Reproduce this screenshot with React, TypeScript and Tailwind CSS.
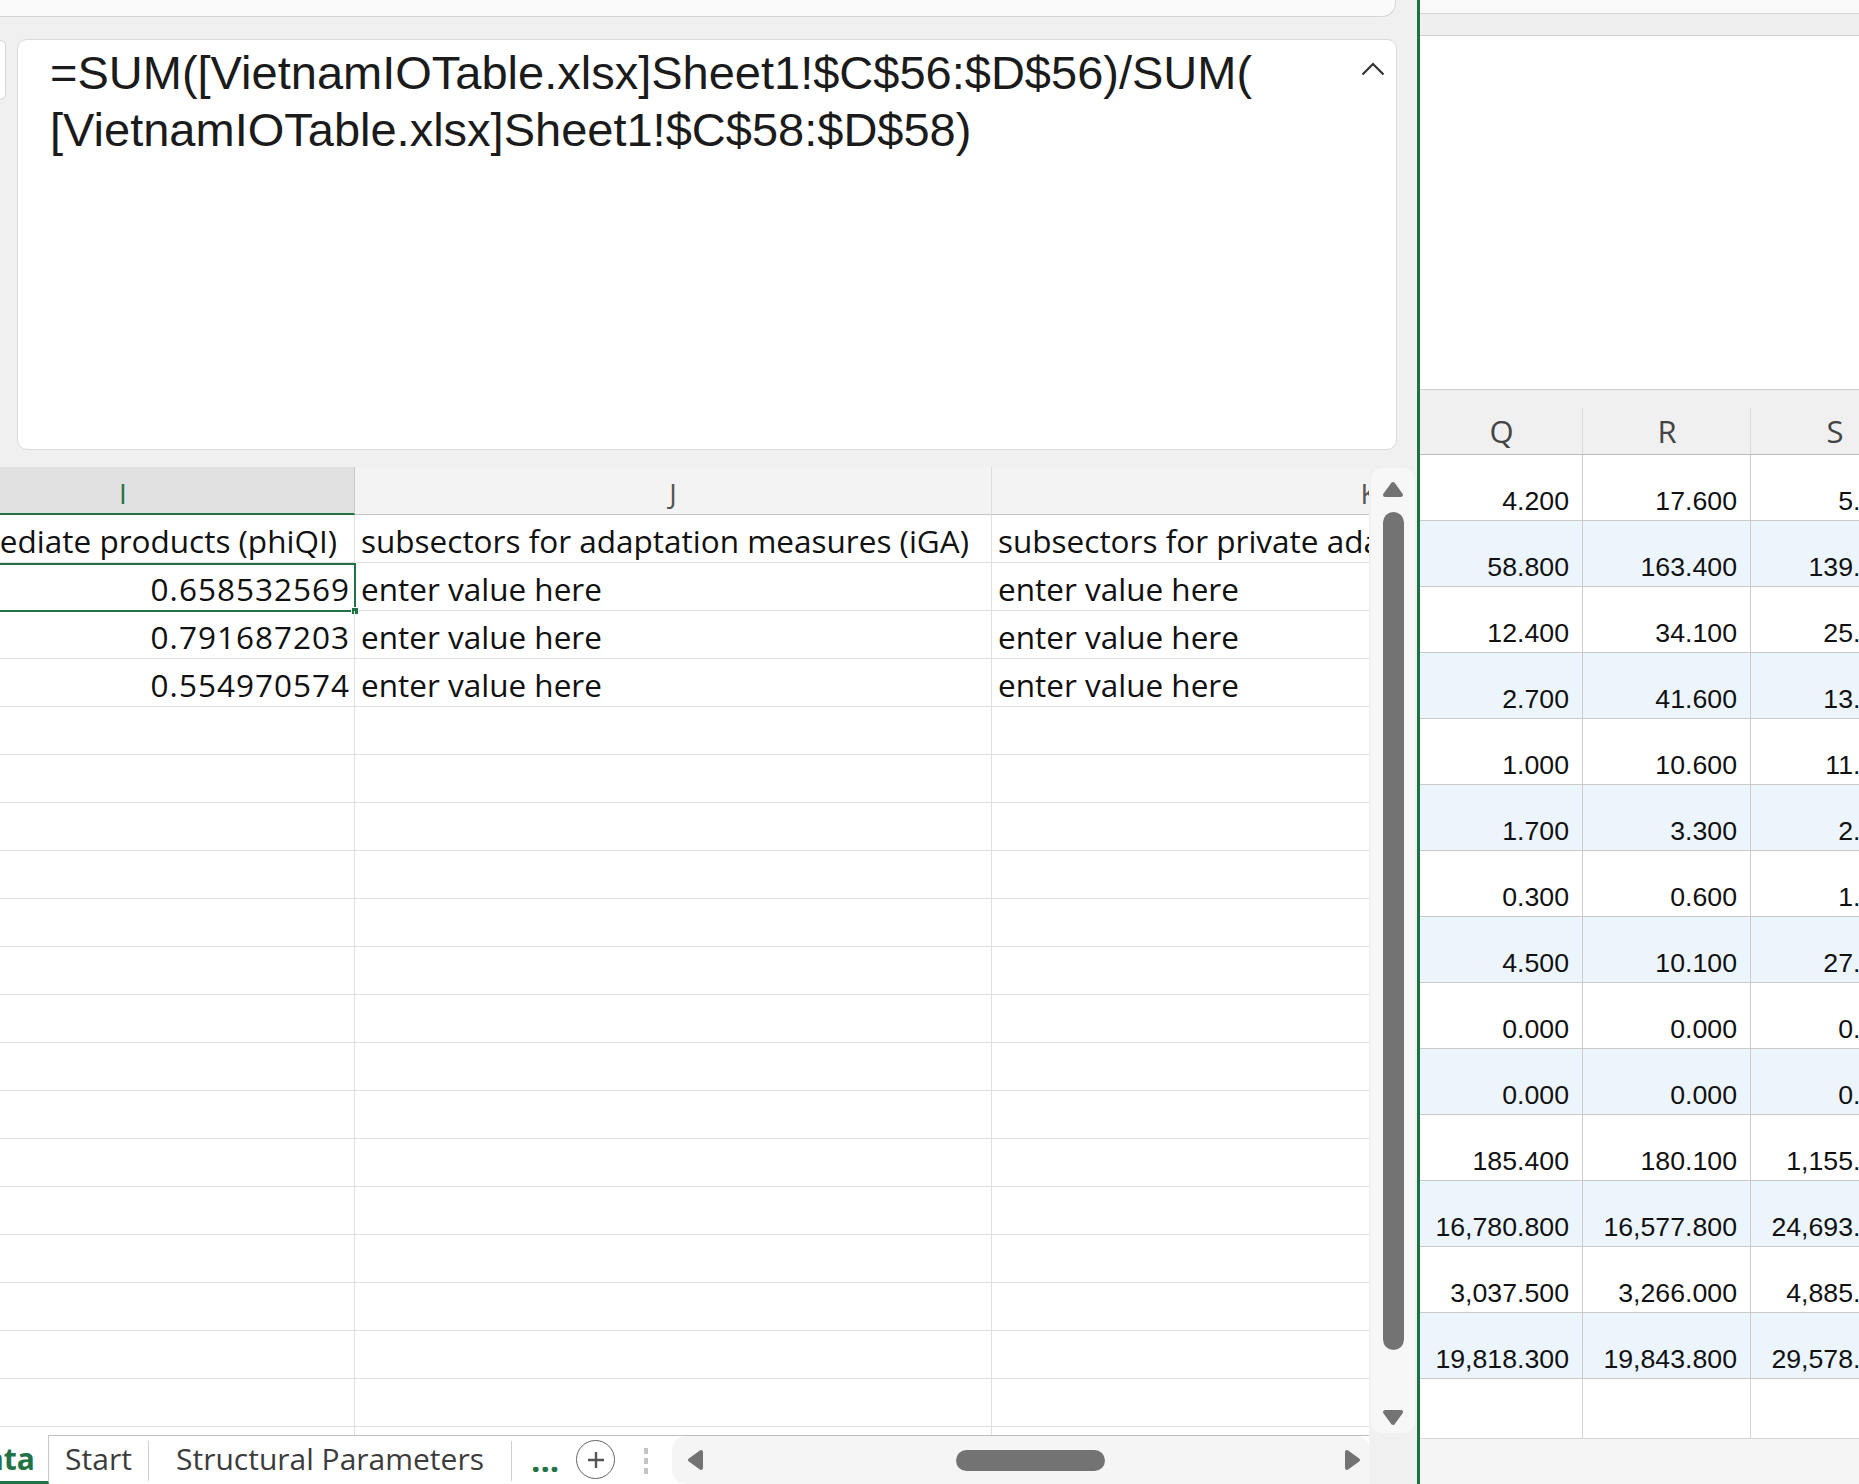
import React from "react";

const Q = ["4.200","58.800","12.400","2.700","1.000","1.700","0.300","4.500","0.000","0.000","185.400","16,780.800","3,037.500","19,818.300"];
const R = ["17.600","163.400","34.100","41.600","10.600","3.300","0.600","10.100","0.000","0.000","180.100","16,577.800","3,266.000","19,843.800"];
const S = ["5.300","139.500","25.200","13.800","11.400","2.100","1.300","27.600","0.000","0.000","1,155.700","24,693.200","4,885.400","29,578.600"];

const OS = "font-['Open_Sans',sans-serif]";
const AR = "font-['Liberation_Sans',Arial,sans-serif]";

function UpTri() {
  return (
    <svg width="22" height="17" viewBox="0 0 22 17">
      <path d="M11 3 L19 14 L3 14 Z" fill="#737373" stroke="#737373" strokeWidth="4" strokeLinejoin="round" />
    </svg>
  );
}
function DownTri() {
  return (
    <svg width="22" height="17" viewBox="0 0 22 17">
      <path d="M3 3 L19 3 L11 14 Z" fill="#737373" stroke="#737373" strokeWidth="4" strokeLinejoin="round" />
    </svg>
  );
}
function LeftTri() {
  return (
    <svg width="17" height="22" viewBox="0 0 17 22">
      <path d="M3 11 L14 3 L14 19 Z" fill="#737373" stroke="#737373" strokeWidth="4" strokeLinejoin="round" />
    </svg>
  );
}
function RightTri() {
  return (
    <svg width="17" height="22" viewBox="0 0 17 22">
      <path d="M14 11 L3 3 L3 19 Z" fill="#737373" stroke="#737373" strokeWidth="4" strokeLinejoin="round" />
    </svg>
  );
}

function LeftGrid() {
  const rows = Array.from({ length: 20 }, (_, i) => i);
  const nums = ["0.658532569", "0.791687203", "0.554970574"];
  return (
    <div className="w-[1369px] h-[968px] overflow-hidden flex flex-col">
      {/* header */}
      <div className={`grid grid-cols-[355px_637px_754px] h-[48px] shrink-0 ${OS} text-[28px] leading-none`}>
        <div className="bg-[#e1e1e1] border-b-2 border-[#217346] border-r border-r-[#c8c8c8] text-[#217346] pl-[119px] pt-[12px]">I</div>
        <div className="bg-[#f3f3f3] border-b border-[#c4c4c4] border-r border-r-[#dcdcdc] text-[#555] text-center pt-[12px]">J</div>
        <div className="bg-[#f3f3f3] border-b border-[#c4c4c4] text-[#555] text-center pt-[12px]">K</div>
      </div>
      {rows.map((i) => (
        <div key={i} className={`grid grid-cols-[355px_637px_754px] h-[48px] shrink-0 ${OS} text-[31.5px] leading-none text-[#111] whitespace-nowrap`}>
          <div className="relative border-b border-r border-[#e0e0e0] flex justify-end pt-[10px] pr-[4px]">
            {i === 0 && <span className="pr-[13px]">intermediate products (phiQI)</span>}
            {i >= 1 && i <= 3 && <span className="tracking-[1px]">{nums[i - 1]}</span>}
            {i === 1 && (
              <>
                <div className="absolute top-0 -left-[2px] -right-[2px] -bottom-[2px] border-2 border-[#217346]" />
                <div className="absolute -right-[5px] -bottom-[5px] w-[8px] h-[8px] bg-[#217346] border border-white" />
              </>
            )}
          </div>
          <div className="border-b border-r border-[#e0e0e0] pt-[10px] pl-[6px]">
            {i === 0 && "subsectors for adaptation measures (iGA)"}
            {i >= 1 && i <= 3 && "enter value here"}
          </div>
          <div className="border-b border-[#e0e0e0] pt-[10px] pl-[6px]">
            {i === 0 && "subsectors for private adaptation measures (iPA)"}
            {i >= 1 && i <= 3 && "enter value here"}
          </div>
        </div>
      ))}
    </div>
  );
}

function VScroll() {
  return (
    <div className="w-[48px] h-[968px] pl-[2px] pr-[2px] pt-[1px] pb-[2px]">
      <div className="h-full bg-[#f7f7f7] rounded-[12px] flex flex-col items-center pt-[13px]">
        <UpTri />
        <div className="mt-[14px] w-[21px] h-[838px] rounded-full bg-[#737373]" />
        <div className="mt-[59px]"><DownTri /></div>
      </div>
    </div>
  );
}

function TabBar() {
  return (
    <div className={`h-[49px] flex ${OS} text-[30px] leading-none`}>
      <div className="w-[49px] h-full bg-white border-r border-[#c8c8c8] border-b-[3px] border-b-[#217346] overflow-hidden flex justify-end pr-[13px] pt-[9px] font-bold text-[#217346]">
        <span>Data</span>
      </div>
      <div className="w-[1320px] h-full border-t border-[#bdbdbd] bg-white flex">
        <div className="w-[99px] text-center text-[#3c3c3c] pt-[8px]">Start</div>
        <div className="w-px h-[40px] mt-[5px] bg-[#cfcfcf]" />
        <div className="w-[362px] text-center text-[#3c3c3c] pt-[8px]">Structural Parameters</div>
        <div className="w-px h-[40px] mt-[5px] bg-[#cfcfcf]" />
        <div className="ml-[19px] w-[30px] pt-[7px] text-[33px] font-bold text-[#217346]">...</div>
        <div className="ml-[15px] mt-[4px] w-[39px] h-[39px] rounded-full border-[1.5px] border-[#666] flex items-center justify-center">
          <svg width="20" height="20" viewBox="0 0 20 20">
            <path d="M10 2 V18 M2 10 H18" stroke="#555" strokeWidth="2.4" />
          </svg>
        </div>
        <div className="ml-[29px] mt-[12px] flex flex-col gap-[4px]">
          <div className="w-[4px] h-[6px] bg-[#c4c4c4]" />
          <div className="w-[4px] h-[6px] bg-[#c4c4c4]" />
          <div className="w-[4px] h-[6px] bg-[#c4c4c4]" />
        </div>
        <div className="ml-[24px] flex-1 h-full bg-[#f5f5f5] rounded-l-[14px] rounded-tr-[12px] relative flex items-center">
          <div className="ml-[15px]"><LeftTri /></div>
          <div className="ml-[252px] w-[149px] h-[21px] rounded-full bg-[#737373]" />
          <div className="ml-auto mr-[8px]"><RightTri /></div>
        </div>
      </div>
    </div>
  );
}

function LeftWindow() {
  return (
    <div className="w-[1417px] h-[1484px] flex flex-col shrink-0">
      <div className="h-[17px] w-[1396px] bg-[#fafafa] border-b border-r border-[#d4d4d4] rounded-br-[14px] shrink-0" />
      <div className="mt-[22px] h-[411px] flex shrink-0">
        <div className="w-[6px] h-[60px] mt-[1px] bg-white border border-l-0 border-[#d6d6d6] rounded-r-[6px]" />
        <div className="relative ml-[11px] w-[1380px] h-[411px] bg-white border border-[#d9d9d9] rounded-[10px] pl-[32px] pt-[4px]">
          <div className={`${AR} text-[47px] leading-[57px] text-[#1b1b1b] whitespace-nowrap`}>
            <div>=SUM([VietnamIOTable.xlsx]Sheet1!$C$56:$D$56)/SUM(</div>
            <div>[VietnamIOTable.xlsx]Sheet1!$C$58:$D$58)</div>
          </div>
          <svg className="absolute top-[22px] right-[11px]" width="24" height="14" viewBox="0 0 24 14">
            <polyline points="1.5,12.5 12,2 22.5,12.5" fill="none" stroke="#333" strokeWidth="2.2" />
          </svg>
        </div>
      </div>
      <div className="mt-[17px] h-[968px] flex shrink-0">
        <div className="bg-white"><LeftGrid /></div>
        <VScroll />
      </div>
      <TabBar />
    </div>
  );
}

function RightWindow() {
  const cell = "border-b border-r border-[#cacaca] flex justify-end pt-[33px] pr-[13px]";
  return (
    <div className="w-[439px] h-[1484px] flex flex-col overflow-hidden shrink-0">
      <div className="h-[14px] bg-[#f9f9f9] border-b border-[#d4d4d4] shrink-0" />
      <div className="h-[22px] bg-[#efefef] border-b border-[#d0d0d0] shrink-0" />
      <div className="h-[353px] bg-white shrink-0" />
      <div className={`h-[66px] shrink-0 grid grid-cols-[163px_168px_168px] bg-[#f0f0f0] border-t border-[#cfcfcf] ${OS} text-[31px] leading-none text-[#444]`}>
        <div className="border-b border-[#bdbdbd] text-center pt-[26px] relative">Q<div className="absolute right-0 top-[18px] bottom-0 w-px bg-[#dadada]" /></div>
        <div className="border-b border-[#bdbdbd] text-center pt-[26px] relative">R<div className="absolute right-0 top-[18px] bottom-0 w-px bg-[#dadada]" /></div>
        <div className="border-b border-[#bdbdbd] text-center pt-[26px]">S</div>
      </div>
      {Q.map((q, i) => (
        <div key={i} className={`h-[66px] shrink-0 grid grid-cols-[163px_168px_168px] ${AR} text-[26.7px] leading-none text-[#111] whitespace-nowrap ${i % 2 === 1 ? "bg-[#edf5fc]" : "bg-white"}`}>
          <div className={cell}>{q}</div>
          <div className={cell}>{R[i]}</div>
          <div className={cell}>{S[i]}</div>
        </div>
      ))}
      <div className="h-[60px] shrink-0 grid grid-cols-[163px_168px_168px] bg-white">
        <div className="border-b border-r border-[#d6d6d6]" />
        <div className="border-b border-r border-[#d6d6d6]" />
        <div className="border-b border-[#d6d6d6]" />
      </div>
      <div className="flex-1 bg-[#f5f5f5]" />
    </div>
  );
}

export default function App() {
  return (
    <div className="w-[1859px] h-[1484px] bg-[#f0f0f0] flex overflow-hidden">
      <LeftWindow />
      <div className="w-[3px] h-[1484px] bg-[#1e7145] shrink-0" />
      <RightWindow />
    </div>
  );
}
